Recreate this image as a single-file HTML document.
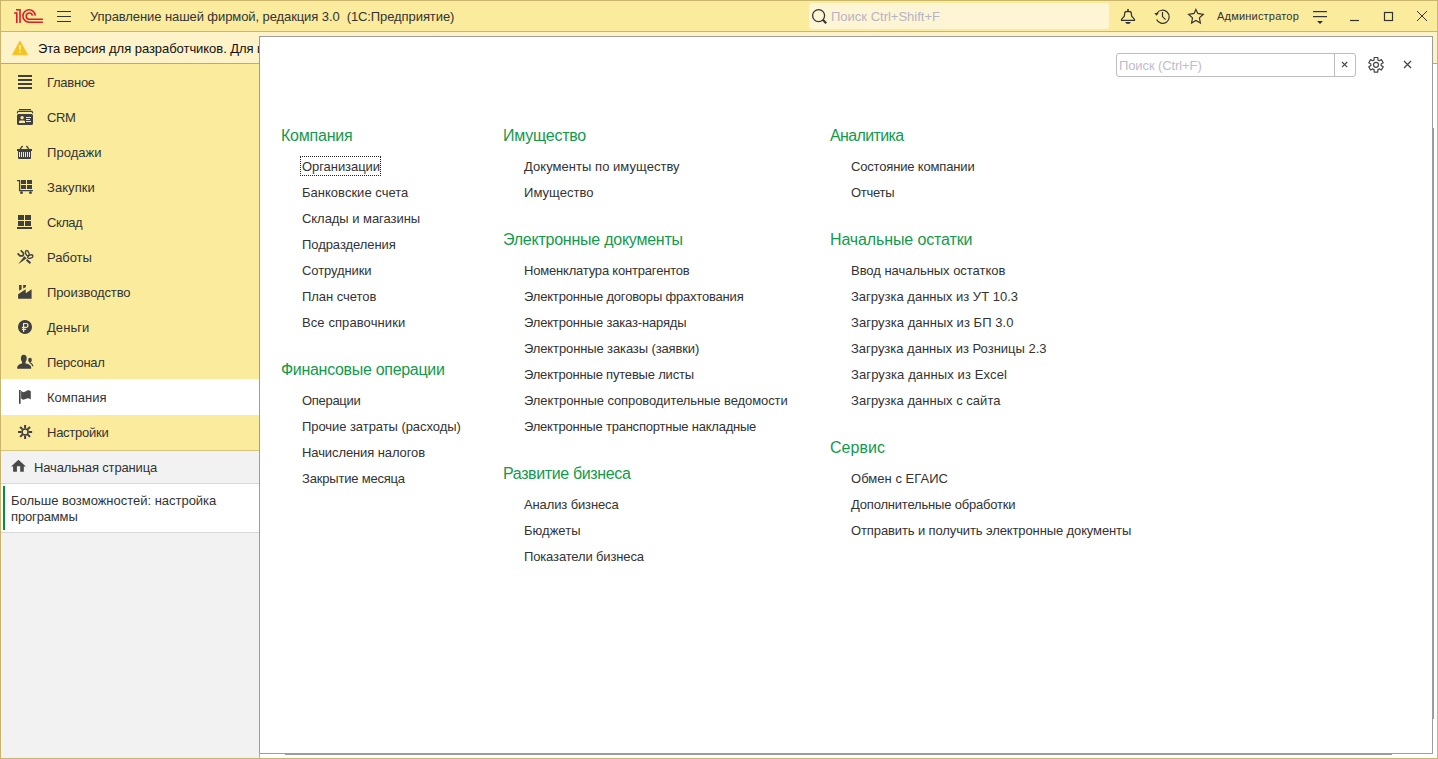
<!DOCTYPE html>
<html><head><meta charset="utf-8">
<style>
*{margin:0;padding:0;box-sizing:border-box}
html,body{width:1438px;height:759px;overflow:hidden;background:#fff;font-family:"Liberation Sans",sans-serif;}
.a{position:absolute}
.t{position:absolute;white-space:nowrap;line-height:16px;font-size:13px;color:#333}
#win{position:absolute;left:0;top:0;width:1438px;height:759px;background:#fff}
#title{left:0;top:0;width:1438px;height:32px;background:#fbeb9d;border-bottom:1px solid #c9b66c}
#warn{left:0;top:32px;width:1438px;height:32px;background:#fef2c8;border-bottom:1px solid #a9a9a9}
#side{left:0;top:64px;width:260px;height:695px;background:#f2f2f2;border-right:1px solid #c9b66c}
#sec{left:0;top:0;width:259px;height:387px;background:#fbeb9d;border-bottom:1px solid #d8c57c}
.si{position:absolute;left:0;width:259px;height:35px}
.si .t{left:47px;top:11px;color:#333;letter-spacing:-0.2px}
.sel{background:#fff;height:36px}
#home{left:0;top:387px;width:259px;height:33px;border-bottom:1px solid #d9d9d9}
#more{left:0;top:420px;width:259px;height:49px;background:#fff;border-bottom:1px solid #d9d9d9}
#panel{left:259px;top:36px;width:1174px;height:718px;background:#fff;border:1px solid #9c9c9c}
.h{position:absolute;white-space:nowrap;font-size:16px;line-height:20px;color:#129a4c;letter-spacing:-0.17px}
.i{position:absolute;white-space:nowrap;font-size:13px;line-height:16px;color:#333;letter-spacing:0px}
#frame{left:0;top:0;width:1438px;height:759px;border:1px solid #c9b66c;pointer-events:none}
</style></head><body>
<div id="win">
  <div id="title" class="a">
    <div class="t" style="left:90px;top:9px;color:#333;letter-spacing:-0.086px">Управление нашей фирмой, редакция 3.0&nbsp;&nbsp;(1С:Предприятие)</div>
    <div class="a" style="left:809px;top:3px;width:300px;height:26px;background:#fdf5d3;border-radius:3px"></div>
    <div class="t" style="left:831px;top:9px;color:#b7b3c6">Поиск Ctrl+Shift+F</div>
    <div class="t" style="left:1217px;top:8px;font-size:11px;color:#333;letter-spacing:0.2px">Администратор</div>
  </div>
  <div id="warn" class="a">
    <div class="t" style="left:38px;top:9px;color:#111;letter-spacing:-0.05px">Эта версия для разработчиков. Для использования в рабочих целях</div>
  </div>
  <div id="side" class="a">
    <div id="sec" class="a">
      <div class="si" style="top:0"><div class="t" style="letter-spacing:-0.267px">Главное</div></div>
      <div class="si" style="top:35px"><div class="t" style="letter-spacing:-0.45px">CRM</div></div>
      <div class="si" style="top:70px"><div class="t" style="letter-spacing:0.05px">Продажи</div></div>
      <div class="si" style="top:105px"><div class="t" style="letter-spacing:0.067px">Закупки</div></div>
      <div class="si" style="top:140px"><div class="t" style="letter-spacing:-0.5px">Склад</div></div>
      <div class="si" style="top:175px"><div class="t" style="letter-spacing:-0.06px">Работы</div></div>
      <div class="si" style="top:210px"><div class="t" style="letter-spacing:-0.109px">Производство</div></div>
      <div class="si" style="top:245px"><div class="t" style="letter-spacing:0.06px">Деньги</div></div>
      <div class="si" style="top:280px"><div class="t" style="letter-spacing:-0.257px">Персонал</div></div>
      <div class="si sel" style="top:315px"><div class="t" style="letter-spacing:0.014px">Компания</div></div>
      <div class="si" style="top:350px"><div class="t" style="letter-spacing:-0.263px">Настройки</div></div>
    </div>
    <div id="home" class="a"><div class="t" style="left:34px;top:9px;letter-spacing:-0.15px">Начальная страница</div></div>
    <div id="more" class="a">
      <div class="a" style="left:3px;top:2px;width:2px;height:44px;background:#079035"></div>
      <div class="t" style="left:11px;top:9px;letter-spacing:-0.02px">Больше возможностей: настройка</div>
      <div class="t" style="left:11px;top:25px;letter-spacing:-0.15px">программы</div>
    </div>
  </div>
<svg class="a" style="left:0;top:0" width="1438" height="759" viewBox="0 0 1438 759">
 <!-- 1C logo -->
 <g fill="none" stroke="#dc1c26" stroke-width="1.6" stroke-linejoin="miter">
  <path d="M14.1,13 H16.8 V23"/>
  <path d="M16,9.8 H20 V23"/>
  <path d="M35.3,15.6 A6.2,6.2 0 1 0 29.2,22.2 H42.9"/>
  <path d="M32.4,15.6 A3.1,3.1 0 1 0 29.2,19.2 H42.9"/>
 </g>
 <!-- hamburger -->
 <g fill="#333">
  <rect x="57" y="11" width="14" height="1"/>
  <rect x="57" y="16" width="14" height="1"/>
  <rect x="57" y="21" width="14" height="1"/>
 </g>
 <!-- search magnifier -->
 <g fill="none" stroke="#333" stroke-width="1.3">
  <circle cx="818.6" cy="15.6" r="6"/>
  <path d="M822.8,19.8 L826.2,23.2" stroke-width="2.2"/>
 </g>
 <!-- bell -->
 <g transform="translate(1116,4)" fill="none" stroke="#333" stroke-width="1.2">
  <path d="M9.6,7.6 H14.4 Q15.5,8.2 15.6,12 L18.5,15.4 V16.3 H5.5 V15.4 L8.4,12 Q8.5,8.2 9.6,7.6 Z"/>
  <rect x="11.2" y="5" width="1.6" height="2.2" fill="#333" stroke="none"/>
  <path d="M9.1,17.9 H14.9 Q14.2,19.9 12,19.9 Q9.8,19.9 9.1,17.9 Z" fill="#333" stroke="none"/>
 </g>
 <!-- history -->
 <g transform="translate(1150,4)" fill="none" stroke="#333" stroke-width="1.2">
  <path d="M7,9.3 A6.6,6.6 0 1 1 6.6,15.6"/>
  <path d="M4.3,9.1 H8.7 L6.5,11.8 Z" fill="#333" stroke="none"/>
  <path d="M12.5,8.1 V12.6 L15.6,15.6"/>
 </g>
 <!-- star -->
 <g transform="translate(1184,4)" fill="none" stroke="#333" stroke-width="1.2" stroke-linejoin="miter">
  <path d="M11.9,5.4 L13.8,9.4 L19.3,10.3 L15.4,13.9 L16.4,19 L11.9,16.5 L7.6,19 L8.5,13.9 L4.6,10.3 L10.1,9.4 Z"/>
 </g>
 <!-- filter -->
 <g fill="#333">
  <rect x="1313" y="11" width="14" height="1.2"/>
  <rect x="1313" y="16" width="14" height="1.2"/>
  <path d="M1317,21 H1323 L1320,24 Z"/>
 </g>
 <!-- window controls -->
 <g fill="none" stroke="#333" stroke-width="1.2">
  <path d="M1350,20.5 H1359"/>
  <rect x="1384.5" y="12.5" width="8" height="8"/>
  <path d="M1417,11 L1427,21 M1427,11 L1417,21" stroke-width="1"/>
 </g>
 <!-- warning triangle -->
 <path d="M20,41 L27.5,54.8 H12.5 Z" fill="#f6c21c" stroke="#f6c21c" stroke-width="0.8" stroke-linejoin="round"/>
 <rect x="19.2" y="45" width="1.6" height="5" fill="#fef2c8"/>
 <rect x="19.2" y="51.2" width="1.6" height="1.6" fill="#fef2c8"/>
 <!-- sidebar icons -->
 <g fill="#404040">
  <!-- Главное -->
  <rect x="18" y="75" width="14" height="2"/>
  <rect x="18" y="79" width="14" height="2"/>
  <rect x="18" y="83" width="14" height="2"/>
  <rect x="18" y="87" width="14" height="2"/>
  <!-- CRM -->
  <rect x="19" y="109" width="12" height="1.2"/>
  <path d="M17.2,113.2 L18,111.4 H32 L32.8,113.2" fill="none" stroke="#404040" stroke-width="1.2"/>
  <path fill-rule="evenodd" d="M18.5,114 H31.5 Q33,114 33,115.5 V123.5 Q33,125 31.5,125 H18.5 Q17,125 17,123.5 V115.5 Q17,114 18.5,114 Z
     M22.1,115.9 A1.7,1.7 0 1 0 22.11,115.9 Z
     M19,123 V121.8 Q19,120.4 20.5,120.4 H23.6 Q25,120.4 25,121.8 V123 Z
     M26,117 H31 V118 H26 Z M26,119 H30 V120 H26 Z M26,121 H31 V122 H26 Z"/>
  <!-- Продажи basket -->
  <path d="M22.6,146 L20.2,148.9 M26.4,146 L28.8,148.9" fill="none" stroke="#404040" stroke-width="1.4"/>
  <rect x="17" y="149" width="15" height="2"/>
  <path fill-rule="evenodd" d="M18,151 H31 V158 Q31,159 30,159 H19 Q18,159 18,158 Z M19,152 V157 H20 V152 Z M21,152 V157 H22 V152 Z M23,152 V157 H24 V152 Z M25,152 V157 H26 V152 Z M27,152 V157 H28 V152 Z M29,152 V157 H30 V152 Z"/>
  <!-- Закупки cart -->
  <path d="M17,180.6 H19.6 V190.6 H33" fill="none" stroke="#404040" stroke-width="1.3"/>
  <rect x="21" y="180" width="5" height="4"/>
  <rect x="27" y="180" width="5" height="4"/>
  <rect x="21" y="185" width="5" height="4"/>
  <rect x="27" y="185" width="5" height="4"/>
  <circle cx="21.5" cy="192.7" r="1.4"/>
  <circle cx="30.5" cy="192.7" r="1.4"/>
  <!-- Склад -->
  <rect x="18" y="215" width="6" height="5"/>
  <rect x="25" y="215" width="6" height="5"/>
  <rect x="18" y="221" width="6" height="5"/>
  <rect x="25" y="221" width="6" height="5"/>
  <rect x="17" y="227" width="15" height="2"/>
  <!-- Работы -->
  <path d="M17.6,253.3 L20,255.9 H22.6 L23.4,254.8 V253 L20.7,250.4" fill="none" stroke="#404040" stroke-width="1.7" stroke-linejoin="round"/>
  <path d="M18.1,264.2 L24.3,256.3 L26.7,258.3 Z"/>
  <path d="M26.6,259.8 L30.4,263.3" fill="none" stroke="#404040" stroke-width="2.1"/>
  <ellipse cx="27.3" cy="253.2" rx="1.6" ry="2.8" transform="rotate(-20 27.3 253.2)" fill="none" stroke="#404040" stroke-width="1.3"/>
  <ellipse cx="30.3" cy="256.6" rx="2.7" ry="1.6" transform="rotate(-20 30.3 256.6)" fill="none" stroke="#404040" stroke-width="1.3"/>
  <!-- Производство -->
  <path d="M19.1,285 H21.6 V289.2 L19.1,290.8 Z"/>
  <path d="M23.2,285 H25.9 V287 L23.2,288.5 Z"/>
  <path d="M18.1,294.3 L25.6,289.2 L25.8,293.3 L31.6,289.2 V298.7 H18.1 Z"/>
  <!-- Деньги -->
  <path fill-rule="evenodd" d="M25,320 A7,7 0 1 1 24.99,320 Z
     M23,323 H26.2 A2.2,2.2 0 0 1 26.2,327.9 H24.2 V328.8 H26.1 V329.9 H24.2 V331.9 H23 V329.9 H21.9 V328.8 H23 V327.9 H21.9 V326.8 H23 Z
     M24.2,324.1 V326.8 H26.2 A1.1,1.35 0 0 0 26.2,324.1 Z"/>
  <!-- Персонал -->
  <ellipse cx="23.8" cy="358.4" rx="2.9" ry="3.7"/>
  <path d="M22.2,361 H25.4 L25.6,363.6 Q31,364.4 31.2,367.5 V368.7 H17.2 V367.5 Q17.5,364.4 22,363.6 Z"/>
  <ellipse cx="30" cy="360" rx="1.8" ry="2.3"/>
  <path d="M29.4,362.5 Q32.6,363.6 32.8,366.3" fill="none" stroke="#404040" stroke-width="1.2"/>
  <!-- Компания flag -->
  <rect x="19" y="390" width="1.6" height="13.8" fill="#444"/>
  <path d="M21.1,390.7 Q22.5,392.4 24,392.1 Q25.6,391.8 27,390.6 Q28.8,389.6 30.8,391.2 V399.6 Q28.8,398 27,398.4 Q25.6,398.8 24,399.6 Q22.5,399.9 21.1,398.6 Z" fill="#4a4a4a"/>
  <!-- Настройки gear -->
  <g transform="translate(25.1,431.9)">
   <circle r="3" fill="none" stroke="#404040" stroke-width="1.5"/>
   <g stroke="#404040" stroke-width="2">
    <path d="M0,-7 V-3.5 M0,7 V3.5 M-7,0 H-3.5 M7,0 H3.5"/>
    <path d="M-4.95,-4.95 L-2.5,-2.5 M4.95,-4.95 L2.5,-2.5 M-4.95,4.95 L-2.5,2.5 M4.95,4.95 L2.5,2.5"/>
   </g>
  </g>
  <!-- Home -->
  <path d="M18.4,459.7 L25.9,466.6 H23.8 V471.8 H20.2 V466.2 H16.9 V471.8 H13.1 V466.6 H11.1 Z" fill="#4a4a4a"/>
 </g>
</svg>

  <div id="panel" class="a">
<div class="h" style="left:21px;top:89px;letter-spacing:-0.227px">Компания</div>
<div class="i" style="left:42px;top:122px;letter-spacing:-0.06px">Организации</div>
<div class="i" style="left:42px;top:148px;letter-spacing:0.02px">Банковские счета</div>
<div class="i" style="left:42px;top:174px;letter-spacing:-0.05px">Склады и магазины</div>
<div class="i" style="left:42px;top:200px;letter-spacing:-0.058px">Подразделения</div>
<div class="i" style="left:42px;top:226px;letter-spacing:-0.1px">Сотрудники</div>
<div class="i" style="left:42px;top:252px;letter-spacing:-0.04px">План счетов</div>
<div class="i" style="left:42px;top:278px;letter-spacing:0.093px">Все справочники</div>
<div class="h" style="left:21px;top:323px;letter-spacing:-0.309px">Финансовые операции</div>
<div class="i" style="left:42px;top:356px;letter-spacing:-0.3px">Операции</div>
<div class="i" style="left:42px;top:382px;letter-spacing:-0.061px">Прочие затраты (расходы)</div>
<div class="i" style="left:42px;top:408px;letter-spacing:-0.094px">Начисления налогов</div>
<div class="i" style="left:42px;top:434px;letter-spacing:-0.193px">Закрытие месяца</div>
<div class="h" style="left:243px;top:89px;letter-spacing:-0.232px">Имущество</div>
<div class="i" style="left:264px;top:122px;letter-spacing:0.043px">Документы по имуществу</div>
<div class="i" style="left:264px;top:148px;letter-spacing:0.037px">Имущество</div>
<div class="h" style="left:243px;top:193px;letter-spacing:-0.24px">Электронные документы</div>
<div class="i" style="left:264px;top:226px;letter-spacing:-0.192px">Номенклатура контрагентов</div>
<div class="i" style="left:264px;top:252px;letter-spacing:-0.177px">Электронные договоры фрахтования</div>
<div class="i" style="left:264px;top:278px;letter-spacing:-0.174px">Электронные заказ-наряды</div>
<div class="i" style="left:264px;top:304px;letter-spacing:-0.119px">Электронные заказы (заявки)</div>
<div class="i" style="left:264px;top:330px;letter-spacing:-0.2px">Электронные путевые листы</div>
<div class="i" style="left:264px;top:356px;letter-spacing:-0.095px">Электронные сопроводительные ведомости</div>
<div class="i" style="left:264px;top:382px;letter-spacing:-0.218px">Электронные транспортные накладные</div>
<div class="h" style="left:243px;top:427px;letter-spacing:-0.363px">Развитие бизнеса</div>
<div class="i" style="left:264px;top:460px;letter-spacing:-0.123px">Анализ бизнеса</div>
<div class="i" style="left:264px;top:486px;letter-spacing:0.017px">Бюджеты</div>
<div class="i" style="left:264px;top:512px;letter-spacing:-0.141px">Показатели бизнеса</div>
<div class="h" style="left:570px;top:89px;letter-spacing:-0.645px">Аналитика</div>
<div class="i" style="left:591px;top:122px;letter-spacing:-0.165px">Состояние компании</div>
<div class="i" style="left:591px;top:148px;letter-spacing:-0.28px">Отчеты</div>
<div class="h" style="left:570px;top:193px;letter-spacing:-0.126px">Начальные остатки</div>
<div class="i" style="left:591px;top:226px;letter-spacing:-0.036px">Ввод начальных остатков</div>
<div class="i" style="left:591px;top:252px;letter-spacing:0.012px">Загрузка данных из УТ 10.3</div>
<div class="i" style="left:591px;top:278px;letter-spacing:0.05px">Загрузка данных из БП 3.0</div>
<div class="i" style="left:591px;top:304px;letter-spacing:-0.007px">Загрузка данных из Розницы 2.3</div>
<div class="i" style="left:591px;top:330px;letter-spacing:0.109px">Загрузка данных из Excel</div>
<div class="i" style="left:591px;top:356px;letter-spacing:0.023px">Загрузка данных с сайта</div>
<div class="h" style="left:570px;top:401px;letter-spacing:0.03px">Сервис</div>
<div class="i" style="left:591px;top:434px;letter-spacing:0.033px">Обмен с ЕГАИС</div>
<div class="i" style="left:591px;top:460px;letter-spacing:-0.191px">Дополнительные обработки</div>
<div class="i" style="left:591px;top:486px;letter-spacing:-0.115px">Отправить и получить электронные документы</div>

  </div>
<svg class="a" style="left:0;top:0" width="1438" height="759" viewBox="0 0 1438 759">
 <!-- panel search field -->
 <rect x="1116.5" y="53.5" width="239" height="23" rx="2.5" fill="#fff" stroke="#bdbdbd" stroke-width="1"/>
 <path d="M1334.5,54 V76" stroke="#bdbdbd" stroke-width="1"/>
 <path d="M1342,62 L1347.2,67.2 M1347.2,62 L1342,67.2" stroke="#444" stroke-width="1.1"/>
 <!-- gear -->
 <path d="M1374.05,59.98 L1374.19,57.52 L1377.81,57.52 L1377.95,59.98 L1379.20,60.70 L1381.40,59.59 L1383.21,62.73 L1381.15,64.08 L1381.15,65.52 L1383.21,66.87 L1381.40,70.01 L1379.20,68.90 L1377.95,69.62 L1377.81,72.08 L1374.19,72.08 L1374.05,69.62 L1372.80,68.90 L1370.60,70.01 L1368.79,66.87 L1370.85,65.52 L1370.85,64.08 L1368.79,62.73 L1370.60,59.59 L1372.80,60.70Z" fill="none" stroke="#444" stroke-width="1.2" stroke-linejoin="round"/>
 <circle cx="1376" cy="64.8" r="2.5" fill="none" stroke="#444" stroke-width="1.2"/>
 <!-- close -->
 <path d="M1404,61 L1411,68 M1411,61 L1404,68" stroke="#444" stroke-width="1.25"/>
</svg>

  <div class="t" style="left:1119px;top:58px;color:#c0bccb;letter-spacing:-0.1px">Поиск (Ctrl+F)</div>

  <div class="a" style="left:1433px;top:128px;width:1px;height:591px;background:#9c9c9c"></div>
  <div class="a" style="left:285px;top:754px;width:1107px;height:1px;background:#9c9c9c"></div>
  <div class="a" style="left:259px;top:754px;width:1px;height:4px;background:#c9b66c"></div>
  <div class="a" style="left:300px;top:156px;width:81px;height:20px;border:1px dotted #222"></div>
  <div id="frame" class="a"></div>
</div>
</body></html>
